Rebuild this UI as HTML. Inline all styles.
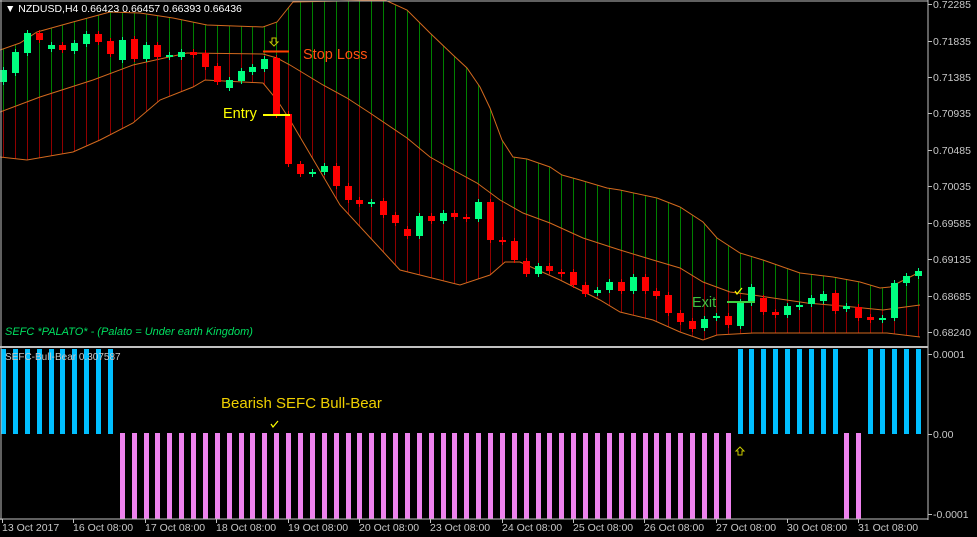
<!DOCTYPE html>
<html><head><meta charset="utf-8"><style>
html,body{margin:0;padding:0;background:#000;width:977px;height:537px;overflow:hidden}
svg{display:block}
text{font-family:"Liberation Sans",sans-serif}
</style></head><body>
<svg id="s" width="977" height="537" xmlns="http://www.w3.org/2000/svg">
<rect width="977" height="537" fill="#000"/>
<g id="bands"></g>
<g id="candles"></g>
<g id="hist"></g>
<line x1="0" y1="1" x2="928" y2="1" stroke="#c0c0c0" stroke-width="1"/>
<line x1="928" y1="0" x2="928" y2="520" stroke="#c0c0c0" stroke-width="1"/>
<line x1="0" y1="347" x2="928" y2="347" stroke="#c0c0c0" stroke-width="2"/>
<line x1="0" y1="519" x2="928" y2="519" stroke="#c0c0c0" stroke-width="1"/>
<line x1="1" y1="0" x2="1" y2="520" stroke="#c0c0c0" stroke-width="1"/>
<g id="ticks" stroke="#c0c0c0"></g>
<g font-size="10.5" fill="#c8c8c8">
<text x="933" y="8">0.72285</text>
<text x="933" y="45">0.71835</text>
<text x="933" y="81">0.71385</text>
<text x="933" y="117">0.70935</text>
<text x="933" y="154">0.70485</text>
<text x="933" y="190">0.70035</text>
<text x="933" y="227">0.69585</text>
<text x="933" y="263">0.69135</text>
<text x="933" y="300">0.68685</text>
<text x="933" y="336">0.68240</text>
<text x="933" y="358">0.0001</text>
<text x="933" y="438">0.00</text>
<text x="933" y="518">-0.0001</text>
</g>
<g font-size="10.5" fill="#c8c8c8">
<text x="2" y="531">13 Oct 2017</text>
<text x="73" y="531">16 Oct 08:00</text>
<text x="145" y="531">17 Oct 08:00</text>
<text x="216" y="531">18 Oct 08:00</text>
<text x="288" y="531">19 Oct 08:00</text>
<text x="359" y="531">20 Oct 08:00</text>
<text x="430" y="531">23 Oct 08:00</text>
<text x="502" y="531">24 Oct 08:00</text>
<text x="573" y="531">25 Oct 08:00</text>
<text x="644" y="531">26 Oct 08:00</text>
<text x="716" y="531">27 Oct 08:00</text>
<text x="787" y="531">30 Oct 08:00</text>
<text x="858" y="531">31 Oct 08:00</text>
</g>
<text x="5" y="12" font-size="10.5" fill="#fff">▼ NZDUSD,H4  0.66423 0.66457 0.66393 0.66436</text>
<text x="5" y="335" font-size="11" font-style="italic" fill="#00e060" font-family="'DejaVu Serif',serif">SEFC *PALATO* - (Palato = Under earth Kingdom)</text>
<text x="5" y="360" font-size="10" fill="#c8c8c8">SEFC-Bull-Bear 0.307587</text>
<line x1="263" y1="51.5" x2="289" y2="51.5" stroke="#ff4000" stroke-width="2"/>
<path d="M272 38h4v4h2l-4 4-4-4h2z" fill="none" stroke="#c8c800" stroke-width="1"/>
<text x="303" y="59" font-size="14.5" fill="#ff5010">Stop Loss</text>
<line x1="263" y1="115" x2="290" y2="115" stroke="#ffff00" stroke-width="2"/>
<text x="223" y="118" font-size="14.5" fill="#ffff00">Entry</text>
<line x1="727" y1="302" x2="755" y2="302" stroke="#40d040" stroke-width="2"/>
<text x="692" y="307" font-size="14.5" fill="#40c040">Exit</text>
<path d="M735 291l2 3 5-6" fill="none" stroke="#ffff00" stroke-width="1.2"/>
<text x="221" y="408" font-size="15" fill="#f0d000">Bearish SEFC Bull-Bear</text>
<path d="M271 424l2 3 5-6" fill="none" stroke="#ffff00" stroke-width="1.2"/>
<path d="M740 447l-4 4h2v4h4v-4h2z" fill="none" stroke="#c8c800" stroke-width="1"/>
</svg>
<script>
var NS="http://www.w3.org/2000/svg";
function el(p,t,a){var e=document.createElementNS(NS,t);for(var k in a)e.setAttribute(k,a[k]);p.appendChild(e);return e;}
function interp(pts,x){for(var i=1;i<pts.length;i++){if(x<=pts[i][0]){var a=pts[i-1],b=pts[i];return a[1]+(b[1]-a[1])*(x-a[0])/(b[0]-a[0]);}}return pts[pts.length-1][1];}
var up=[[0,50],[20,43],[37,32],[73,22],[110,12],[140,13],[173,18],[207,25],[263,27],[277,22],[293,2],[385,0],[407,10],[430,33],[453,55],[467,68],[480,87],[490,108],[502,140],[513,157],[527,159],[550,167],[562,175],[580,180],[607,188],[620,190],[657,198],[680,207],[703,222],[717,238],[740,253],[763,260],[800,273],[833,277],[860,282],[880,288],[890,287],[920,272]];
var mid=[[0,112],[40,97],[93,80],[133,65],[187,53],[263,54],[277,58],[290,65],[323,85],[347,98],[370,113],[407,138],[430,157],[453,170],[477,183],[500,200],[523,213],[550,223],[583,238],[620,250],[653,260],[680,268],[703,282],[730,292],[753,295],[807,303],[853,307],[883,310],[920,305]];
var lo=[[0,157],[27,160],[73,152],[100,140],[133,123],[160,100],[193,87],[205,80],[263,83],[277,100],[290,120],[340,205],[400,270],[460,285],[490,275],[505,262],[520,262],[560,280],[600,300],[620,312],[653,320],[680,332],[703,340],[717,335],[753,333],[800,333],[887,333],[920,337]];
var B=document.getElementById('bands'),C=document.getElementById('candles'),H=document.getElementById('hist'),T=document.getElementById('ticks');
function cx(i){return 3+11.88*i;}
for(var i=0;i<78;i++){var x=Math.round(cx(i))+0.5;var u=interp(up,x),m=interp(mid,x),l=interp(lo,x);
el(B,'line',{x1:x,y1:Math.max(u,1),x2:x,y2:m,stroke:'#008000','stroke-width':1});
el(B,'line',{x1:x,y1:m,x2:x,y2:l,stroke:'#900000','stroke-width':1});}
function pl(pts){el(B,'polyline',{points:pts.map(function(p){return p[0]+','+p[1]}).join(' '),fill:'none',stroke:'#d2691e','stroke-width':1});}
pl(up);pl(mid);pl(lo);
var cd=[[82,70],[73,52],[53,33],[33,40],[49,45],[45,50],[51,43],[44,34],[34,42],[41,54],[60,40],[39,59],[59,45],[45,57],[57,55],[57,52],[52,55],[53,67],[66,82],[88,80],[81,71],[72,67],[69,59],[58,115],[114,164],[164,174],[174,172],[172,166],[166,186],[186,200],[200,204],[204,202],[201,215],[215,223],[229,236],[236,216],[216,221],[221,213],[213,217],[217,219],[219,202],[202,240],[240,242],[241,260],[261,274],[274,266],[266,271],[272,273],[272,285],[285,294],[293,290],[290,282],[282,291],[291,277],[277,291],[291,296],[295,313],[313,322],[321,329],[328,319],[318,316],[316,325],[326,302],[303,287],[298,312],[312,315],[315,306],[306,305],[304,298],[301,294],[293,311],[309,306],[307,318],[317,320],[320,318],[318,283],[283,276],[276,271]];
for(var i=0;i<cd.length;i++){var o=cd[i][0],c=cd[i][1];var col=c>o?'#ff0000':'#00ff80';var x=Math.round(cx(i));var t=Math.min(o,c),b=Math.max(o,c);if(b-t<2)b=t+2;
el(C,'line',{x1:x+0.5,y1:t-3,x2:x+0.5,y2:b+3,stroke:col,'stroke-width':1});
el(C,'rect',{x:x-3,y:t,width:7,height:b-t,fill:col});}
for(var i=0;i<78;i++){var x=Math.round(cx(i))-2;var blue=(i<=9)||(i>=62&&i<=70)||(i>=73);
if(blue)el(H,'rect',{x:x,y:349,width:5,height:85,fill:'#00bfff'});
else el(H,'rect',{x:x,y:433,width:5,height:86,fill:'#ee82ee'});}
[4,41,77,113,150,186,223,259,296,332,354,434,514].forEach(function(y){el(T,'line',{x1:928,y1:y+0.5,x2:932,y2:y+0.5});});
[2,73,145,216,288,359,430,502,573,644,716,787,858].forEach(function(x){el(T,'line',{x1:x+0.5,y1:519,x2:x+0.5,y2:523});});
</script>
</body></html>
